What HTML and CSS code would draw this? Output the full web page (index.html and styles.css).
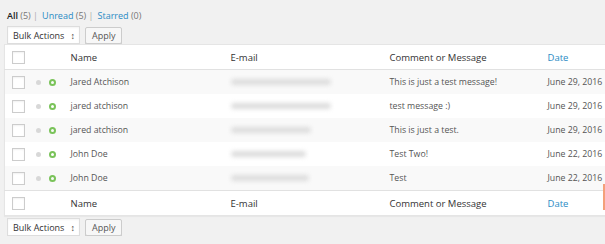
FILE: index.html
```
<!DOCTYPE html>
<html lang="en">
<head>
  <meta charset="UTF-8">
  <title>Messages</title>
  <link rel="stylesheet" href="styles.css">
</head>
<body>
  <div class="wrap">
    <ul class="subsubsub">
      <li><a class="current">All</a> <span class="count">(5)</span> |</li>
      <li><a>Unread</a> <span class="count">(5)</span> |</li>
      <li><a>Starred</a> <span class="count">(0)</span></li>
    </ul>

    <div class="tablenav">
      <div class="select">Bulk Actions <span class="arrows">&#8597;</span></div>
      <button class="button">Apply</button>
    </div>

    <div class="table-box">
      <table class="list-table">
        <colgroup>
          <col class="c-cb"><col class="c-icons"><col class="c-name"><col class="c-email"><col class="c-msg"><col class="c-date">
        </colgroup>
        <thead>
          <tr>
            <td><span class="cb"></span></td>
            <td></td>
            <th>Name</th>
            <th>E-mail</th>
            <th>Comment or Message</th>
            <th class="sortable">Date</th>
          </tr>
        </thead>
        <tbody>
          <tr class="alt">
            <td><span class="cb"></span></td>
            <td class="icons"><span class="star"></span><span class="unread"></span></td>
            <td>Jared Atchison</td>
            <td><span class="blur w1"></span></td>
            <td>This is just a test message!</td>
            <td>June 29, 2016</td>
          </tr>
          <tr>
            <td><span class="cb"></span></td>
            <td class="icons"><span class="star"></span><span class="unread"></span></td>
            <td>jared atchison</td>
            <td><span class="blur w1"></span></td>
            <td>test message :)</td>
            <td>June 29, 2016</td>
          </tr>
          <tr class="alt">
            <td><span class="cb"></span></td>
            <td class="icons"><span class="star"></span><span class="unread"></span></td>
            <td>jared atchison</td>
            <td><span class="blur w2"></span></td>
            <td>This is just a test.</td>
            <td>June 29, 2016</td>
          </tr>
          <tr>
            <td><span class="cb"></span></td>
            <td class="icons"><span class="star"></span><span class="unread"></span></td>
            <td>John Doe</td>
            <td><span class="blur w3"></span></td>
            <td>Test Two!</td>
            <td>June 22, 2016</td>
          </tr>
          <tr class="alt">
            <td><span class="cb"></span></td>
            <td class="icons"><span class="star"></span><span class="unread"></span></td>
            <td>John Doe</td>
            <td><span class="blur w4"></span></td>
            <td>Test</td>
            <td>June 22, 2016</td>
          </tr>
        </tbody>
        <tfoot>
          <tr>
            <td><span class="cb"></span></td>
            <td></td>
            <th>Name</th>
            <th>E-mail</th>
            <th>Comment or Message</th>
            <th class="sortable">Date</th>
          </tr>
        </tfoot>
      </table>
      <span class="edge"></span>
    </div>

    <div class="tablenav bottom">
      <div class="select">Bulk Actions <span class="arrows">&#8597;</span></div>
      <button class="button">Apply</button>
    </div>
  </div>
</body>
</html>
```

FILE: styles.css
```
html, body {
  margin: 0;
  background: #f1f1f1;
}
body {
  font-family: "Open Sans", "Liberation Sans", sans-serif;
  font-size: 9px;
  color: #555;
  overflow: hidden;
}
.wrap {
  padding: 9px 0 0 4px;
}
.subsubsub {
  list-style: none;
  margin: 0 0 0 3px;
  padding: 0;
  display: flex;
  gap: 4px;
  color: #aaa;
  line-height: 14px;
}
.subsubsub a {
  color: #2a8bc4;
}
.subsubsub a.current {
  color: #222;
  font-weight: 600;
}
.subsubsub .count {
  color: #777;
}
.tablenav {
  display: flex;
  align-items: center;
  gap: 5px;
  margin: 3px 0 0 3px;
  height: 18px;
}
.tablenav.bottom {
  margin-top: 2px;
}
.select {
  width: 62px;
  height: 16px;
  padding: 0 4px 0 5px;
  background: #fff;
  border: 1px solid #ddd;
  box-shadow: inset 0 1px 2px rgba(0,0,0,0.05);
  display: flex;
  align-items: center;
  justify-content: space-between;
  color: #333;
  font-size: 9px;
}
.arrows {
  font-size: 9px;
  font-weight: bold;
  color: #444;
}
.button {
  height: 17px;
  padding: 0 6px;
  font-family: inherit;
  font-size: 9px;
  color: #555;
  background: #f7f7f7;
  border: 1px solid #ccc;
  border-radius: 2px;
  box-shadow: 0 1px 0 #ccc;
}
.table-box {
  position: relative;
  width: 640px;
}
.list-table {
  width: 640px;
  table-layout: fixed;
  border-collapse: collapse;
  background: #fff;
  border: 1px solid #e5e5e5;
  box-shadow: 0 1px 1px rgba(0,0,0,0.04);
}
.c-cb { width: 26px; }
.c-icons { width: 32px; }
.c-name { width: 160px; }
.c-email { width: 159px; }
.c-msg { width: 158px; }
.list-table th,
.list-table td {
  height: 24px;
  padding: 0 0 0 8px;
  text-align: left;
  font-size: 8.75px;
  font-weight: normal;
  vertical-align: middle;
  white-space: nowrap;
}
.list-table td:first-child {
  padding-left: 7px;
}
.list-table td.icons {
  padding-left: 4px;
}
.list-table thead th,
.list-table tfoot th {
  font-size: 9.5px;
  color: #333;
}
.list-table thead tr {
  border-bottom: 1px solid #e1e1e1;
}
.list-table tfoot tr {
  border-top: 1px solid #e1e1e1;
}
.list-table th.sortable {
  color: #2a8bc4;
}
.list-table tr.alt {
  background: #f9f9f9;
}
.cb {
  display: block;
  width: 11px;
  height: 11px;
  border: 1px solid #ccc;
  background: #fff;
  box-shadow: inset 0 1px 2px rgba(0,0,0,0.06);
}
.star {
  display: inline-block;
  width: 5px;
  height: 5px;
  border-radius: 50%;
  background: #d8d8d8;
  margin: 0 8px 0 1px;
  vertical-align: middle;
}
.unread {
  display: inline-block;
  width: 3px;
  height: 3px;
  border: 2px solid #7ac35a;
  border-radius: 50%;
  vertical-align: middle;
}
.blur {
  display: block;
  height: 6px;
  background: #ddd;
  filter: blur(2px);
  border-radius: 3px;
}
.w1 { width: 100px; }
.w2 { width: 80px; }
.w3 { width: 75px; }
.w4 { width: 78px; }
.edge {
  position: absolute;
  left: 599px;
  top: 140px;
  width: 2px;
  height: 26px;
  background: #f4a07a;
}
```
